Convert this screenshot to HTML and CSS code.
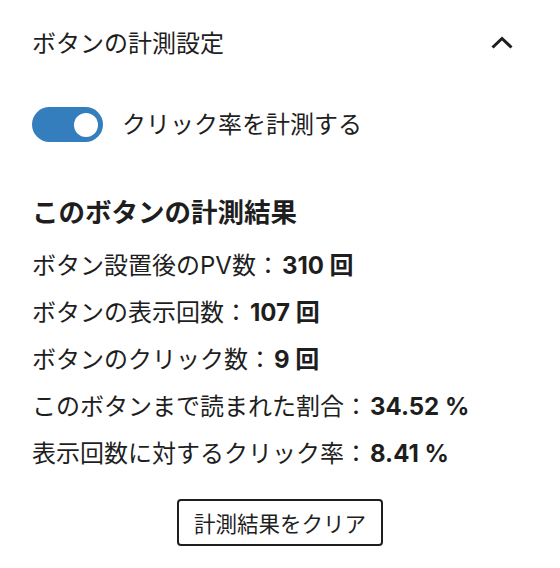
FILE: index.html
```html
<!DOCTYPE html>
<html lang="ja">
<head>
<meta charset="utf-8">
<link rel="stylesheet" href="styles.css">
</head>
<body>
<div class="panel">
  <div class="header">
    <span class="title">ボタンの計測設定</span>
    <svg class="chevron" width="24" height="14" viewBox="0 0 24 14"><path d="M2.5 11.5 L12 2.5 L21.5 11.5" fill="none" stroke="#1e1e1e" stroke-width="3"/></svg>
  </div>
  <div class="toggle-row">
    <span class="toggle"><span class="knob"></span></span>
    <span class="toggle-label">クリック率を計測する</span>
  </div>
  <h2 class="heading">このボタンの計測結果</h2>
  <ul class="stats">
    <li>ボタン設置後のPV数：<b>310 回</b></li>
    <li>ボタンの表示回数：<b>107 回</b></li>
    <li>ボタンのクリック数：<b>9 回</b></li>
    <li>このボタンまで読まれた割合：<b>34.52 %</b></li>
    <li>表示回数に対するクリック率：<b>8.41 %</b></li>
  </ul>
  <div class="actions">
    <button class="clear-btn">計測結果をクリア</button>
  </div>
</div>
</body>
</html>
```
FILE: styles.css
```css
html, body {
  margin: 0;
  padding: 0;
  background: #fff;
}
body {
  font-family: "Inter", "Noto Sans CJK JP", sans-serif;
  color: #1e1e1e;
}
.panel {
  padding: 0 32px;
}
.header {
  height: 88px;
  display: flex;
  align-items: center;
  justify-content: space-between;
}
.title {
  font-size: 24px;
  line-height: 32px;
}
.chevron {
  margin-right: 14px;
  margin-top: -2px;
}
.toggle-row {
  margin-top: 19px;
  display: flex;
  align-items: center;
  gap: 19px;
  height: 35px;
}
.toggle {
  width: 71px;
  height: 35px;
  border-radius: 18px;
  background: #357ebd;
  display: flex;
  align-items: center;
  justify-content: flex-end;
  padding-right: 5px;
  box-sizing: border-box;
}
.knob {
  width: 24px;
  height: 24px;
  border-radius: 50%;
  background: #fff;
}
.toggle-label {
  font-size: 24px;
  line-height: 32px;
}
.heading {
  margin: 52px 0 0;
  font-size: 26.5px;
  line-height: 36px;
  font-weight: 700;
}
.stats {
  list-style: none;
  margin: 12px 0 0;
  padding: 0;
}
.stats li {
  font-size: 24px;
  line-height: 47px;
}
.stats b {
  font-weight: 700;
  margin-left: 2px;
}
.actions {
  display: flex;
  justify-content: center;
  margin-top: 22px;
  margin-left: -32px;
  margin-right: -32px;
}
.clear-btn {
  font-family: "Inter", "Noto Sans CJK JP", sans-serif;
  font-size: 21.5px;
  color: #1e1e1e;
  background: #fff;
  border: 2px solid #1e1e1e;
  border-radius: 4px;
  width: 206px;
  height: 47px;
  padding: 0;
}
```
